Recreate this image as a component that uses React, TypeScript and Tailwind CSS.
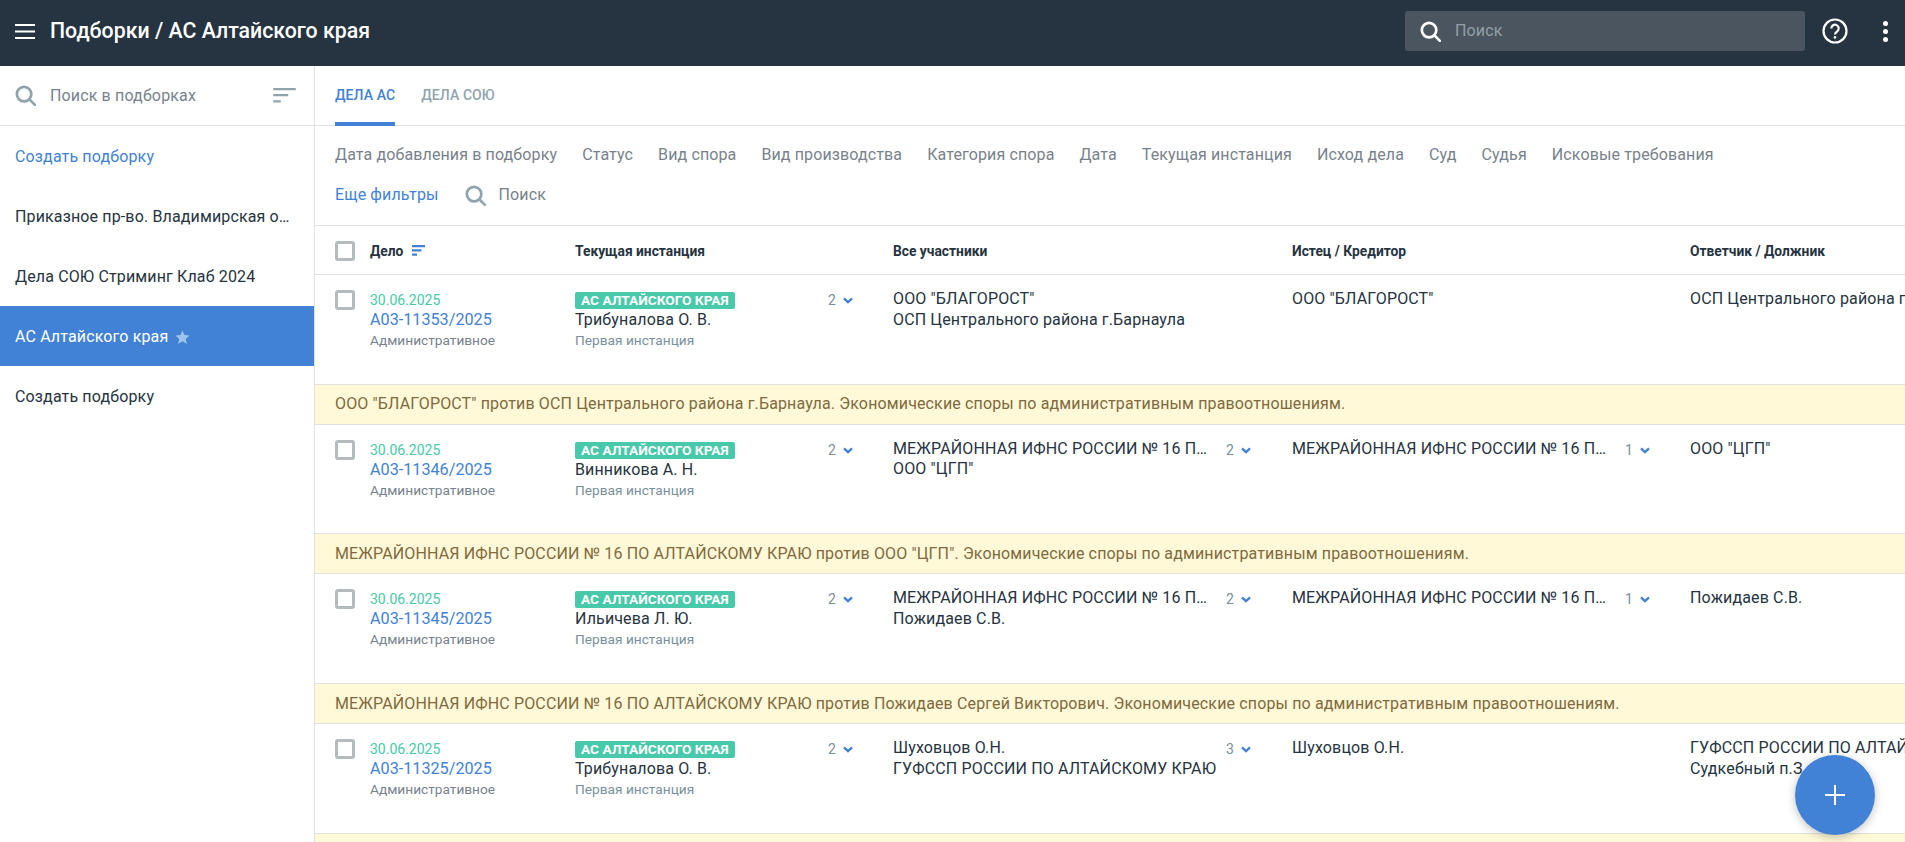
import React from "react";

const SearchIcon = ({ className }: { className: string }) => (
  <svg viewBox="0 0 22 22" fill="none" stroke="currentColor" strokeWidth="2.8" className={className}>
    <circle cx="9.5" cy="9.5" r="7.6" />
    <path d="M15 15l5.8 5.8" strokeLinecap="round" />
  </svg>
);

const SortIcon = ({ className }: { className: string }) => (
  <svg viewBox="0 0 24 16" fill="currentColor" className={className}>
    <path d="M0 0h24v2.4H0zM0 6.5h16v2.4H0zM0 13h8v2.4H0z" />
  </svg>
);

const Chevron = () => (
  <svg viewBox="0 0 12 8" fill="none" stroke="#4282d6" strokeWidth="2.8" className="w-[10px] h-[7px]">
    <path d="M1.2 1.4L6 6l4.8-4.6" />
  </svg>
);

const Checkbox = () => <div className="w-5 h-5 border-[3px] border-[#b4bbbf] rounded-[3px] bg-white shrink-0" />;

const Count = ({ n }: { n: number }) => (
  <div className="mt-[1px] flex items-center gap-[7px] text-[14px] leading-[21px] text-[#78909c] shrink-0">
    <span>{n}</span>
    <Chevron />
  </div>
);

const Cell = ({ lines, count }: { lines: string[]; count?: number }) => (
  <div className="flex items-start pt-[14px]">
    <div className="w-[333px] shrink-0 text-[16px] tracking-[0.14px] leading-[20.5px] text-[#263340]">
      {lines.map((l) => (
        <div key={l} className="w-[325px] truncate">
          {l}
        </div>
      ))}
    </div>
    {count ? <Count n={count} /> : null}
  </div>
);

type Row = {
  num: string;
  judge: string;
  all: string[];
  allCount?: number;
  plaintiff: string;
  plaintiffCount?: number;
  defendant: string[];
  banner: string;
};

const mifns = "МЕЖРАЙОННАЯ ИФНС РОССИИ № 16 ПО АЛТАЙСКОМУ КРАЮ";

const rows: Row[] = [
  {
    num: "А03-11353/2025",
    judge: "Трибуналова О. В.",
    all: ['ООО "БЛАГОРОСТ"', "ОСП Центрального района г.Барнаула"],
    plaintiff: 'ООО "БЛАГОРОСТ"',
    defendant: ["ОСП Центрального района г.Барнаула"],
    banner: 'ООО "БЛАГОРОСТ" против ОСП Центрального района г.Барнаула. Экономические споры по административным правоотношениям.',
  },
  {
    num: "А03-11346/2025",
    judge: "Винникова А. Н.",
    all: [mifns, 'ООО "ЦГП"'],
    allCount: 2,
    plaintiff: mifns,
    plaintiffCount: 1,
    defendant: ['ООО "ЦГП"'],
    banner: 'МЕЖРАЙОННАЯ ИФНС РОССИИ № 16 ПО АЛТАЙСКОМУ КРАЮ против ООО "ЦГП". Экономические споры по административным правоотношениям.',
  },
  {
    num: "А03-11345/2025",
    judge: "Ильичева Л. Ю.",
    all: [mifns, "Пожидаев С.В."],
    allCount: 2,
    plaintiff: mifns,
    plaintiffCount: 1,
    defendant: ["Пожидаев С.В."],
    banner: "МЕЖРАЙОННАЯ ИФНС РОССИИ № 16 ПО АЛТАЙСКОМУ КРАЮ против Пожидаев Сергей Викторович. Экономические споры по административным правоотношениям.",
  },
  {
    num: "А03-11325/2025",
    judge: "Трибуналова О. В.",
    all: ["Шуховцов О.Н.", "ГУФССП РОССИИ ПО АЛТАЙСКОМУ КРАЮ"],
    allCount: 3,
    plaintiff: "Шуховцов О.Н.",
    defendant: ["ГУФССП РОССИИ ПО АЛТАЙСКОМУ КРАЮ", "Судкебный п.З."],
    banner: "",
  },
];

const filters = [
  "Дата добавления в подборку",
  "Статус",
  "Вид спора",
  "Вид производства",
  "Категория спора",
  "Дата",
  "Текущая инстанция",
  "Исход дела",
  "Суд",
  "Судья",
  "Исковые требования",
];

const sideItems = ["Приказное пр-во. Владимирская область", "Дела СОЮ Стриминг Клаб 2024"];

const gridCols = "grid grid-cols-[55px_205px_318px_399px_398px_500px]";

export default function App() {
  return (
    <div className="relative w-[1905px] h-[842px] overflow-hidden bg-white font-['Roboto',sans-serif] flex flex-col">
      <header className="h-[66px] shrink-0 bg-[#263340] flex items-center pl-[15px] pr-[17px] pb-[4px] text-white">
        <svg viewBox="0 0 20 15" fill="white" className="w-5 h-[15px] mr-[15px]">
          <path d="M0 0h20v2H0zM0 6.5h20v2H0zM0 13h20v2H0z" />
        </svg>
        <div className="text-[21.3px] font-medium leading-none">Подборки / АС Алтайского края</div>
        <div className="ml-auto w-[400px] h-10 bg-[#4a5560] rounded-[3px] flex items-center pl-[15px]">
          <SearchIcon className="w-[21px] h-[21px] text-white" />
          <span className="ml-[14px] text-[16px] tracking-[0.14px] text-[#93a0a6]">Поиск</span>
        </div>
        <div className="ml-[17px] w-[26px] flex justify-center">
          <svg viewBox="0 0 26 26" fill="none" stroke="white" className="w-[26px] h-[26px]">
            <circle cx="13" cy="13" r="11.5" strokeWidth="2.2" />
            <path d="M9.3 10.4a3.7 3.7 0 1 1 5.9 3c-1.4 1-2.2 1.6-2.2 3.2" strokeWidth="2.2" />
            <circle cx="13" cy="19.4" r="1.3" fill="white" stroke="none" />
          </svg>
        </div>
        <div className="ml-[35px] flex flex-col gap-[3px]">
          <div className="w-[5px] h-[5px] rounded-full bg-white" />
          <div className="w-[5px] h-[5px] rounded-full bg-white" />
          <div className="w-[5px] h-[5px] rounded-full bg-white" />
        </div>
      </header>

      <div className="flex flex-1 min-h-0">
        <aside className="w-[315px] shrink-0 border-r border-[#dfe2e4] text-[16px] tracking-[0.14px]">
          <div className="h-[60px] border-b border-[#dfe2e4] flex items-center pl-[15px] pr-[18px]">
            <SearchIcon className="w-[21px] h-[21px] text-[#90a4ae]" />
            <span className="ml-[14px] text-[#78828c]">Поиск в подборках</span>
            <SortIcon className="ml-auto w-[23px] h-[15px] text-[#90a4ae]" />
          </div>
          <div className="h-[60px] pt-[2px] flex items-center px-[15px] text-[#4282d6]">Создать подборку</div>
          {sideItems.map((s) => (
            <div key={s} className="h-[60px] pt-[2px] flex items-center pl-[15px] pr-[20px] text-[#263340]">
              <span className="truncate">{s}</span>
            </div>
          ))}
          <div className="h-[60px] pt-[2px] flex items-center px-[15px] text-white bg-[#4282d6]">
            <span>АС Алтайского края</span>
            <svg viewBox="0 0 24 24" fill="#9cc6e8" className="ml-[6px] w-[17px] h-[17px]">
              <path d="M12 17.27L18.18 21l-1.64-7.03L22 9.24l-7.19-.61L12 2 9.19 8.63 2 9.24l5.46 4.73L5.82 21z" />
            </svg>
          </div>
          <div className="h-[60px] pt-[2px] flex items-center px-[15px] text-[#263340]">Создать подборку</div>
        </aside>

        <main className="flex-1 min-w-0 overflow-hidden">
          <div className="h-[60px] border-b border-[#dfe2e4] flex pl-5 gap-[26px] text-[14px] tracking-[0.1px] font-medium">
            <div className="relative flex items-center text-[#4282d6]">
              ДЕЛА АС
              <div className="absolute left-0 right-0 bottom-[-1px] h-1 bg-[#4282d6]" />
            </div>
            <div className="flex items-center text-[#90a4ae]">ДЕЛА СОЮ</div>
          </div>

          <div className="h-[100px] border-b border-[#dfe2e4] pl-5 pt-[9px] text-[16px] tracking-[0.12px] text-[#78828c]">
            <div className="flex gap-[25px] h-[40px] items-center">
              {filters.map((f) => (
                <span key={f}>{f}</span>
              ))}
            </div>
            <div className="flex items-center h-[40px]">
              <span className="text-[#4282d6]">Еще фильтры</span>
              <SearchIcon className="ml-[26px] w-[21px] h-[21px] text-[#90a4ae]" />
              <span className="ml-[13px]">Поиск</span>
            </div>
          </div>

          <div className={`${gridCols} h-[49px] pt-[2px] border-b border-[#dfe2e4] items-center text-[13.8px] font-bold text-[#263340]`}>
            <div className="pl-5">
              <Checkbox />
            </div>
            <div className="flex items-center gap-[9px]">
              Дело
              <svg viewBox="0 0 13 11" fill="#4282d6" className="w-[13px] h-[11px] -mt-[2px]">
                <path d="M0 0h13v2.2H0zM0 4.3h9.5v2.2H0zM0 8.6h5v2.2H0z" />
              </svg>
            </div>
            <div>Текущая инстанция</div>
            <div>Все участники</div>
            <div>Истец / Кредитор</div>
            <div>Ответчик / Должник</div>
          </div>

          {rows.map((r) => (
            <div key={r.num}>
              <div className={`${gridCols} h-[108.7px]`}>
                <div className="pl-5 pt-[15px]">
                  <Checkbox />
                </div>
                <div className="pt-[16px]">
                  <div className="text-[14px] leading-[19px] text-[#48c9a9]">30.06.2025</div>
                  <div className="text-[16.2px] leading-[20px] text-[#4282d6]">{r.num}</div>
                  <div className="text-[13.7px] leading-[20px] text-[#78828c]">Административное</div>
                </div>
                <div className="flex items-start pt-[17px]">
                  <div className="w-[253px] shrink-0">
                    <div className="h-[17px] w-fit rounded-[2px] bg-[#48c9a9] px-[6px] text-[13.7px] leading-[17px] font-bold text-white">
                      АС АЛТАЙСКОГО КРАЯ
                    </div>
                    <div className="mt-[1px] text-[16px] tracking-[0.14px] leading-[20px] text-[#263340]">{r.judge}</div>
                    <div className="text-[13.7px] leading-[20px] text-[#78909c]">Первая инстанция</div>
                  </div>
                  <div className="-mt-[3px]">
                    <Count n={2} />
                  </div>
                </div>
                <Cell lines={r.all} count={r.allCount} />
                <Cell lines={[r.plaintiff]} count={r.plaintiffCount} />
                <div className="pt-[14px] text-[16px] tracking-[0.14px] leading-[20.5px] text-[#263340] whitespace-nowrap">
                  {r.defendant.map((d) => (
                    <div key={d}>{d}</div>
                  ))}
                </div>
              </div>
              <div className="h-[41px] border-y border-[#dfe2e4] bg-[#fff9d8] flex items-center pl-5 text-[16px] tracking-[0.14px] text-[#80693d] whitespace-nowrap">
                {r.banner}
              </div>
            </div>
          ))}
        </main>
      </div>

      <div className="absolute left-[1795px] top-[755px] w-20 h-20 rounded-full bg-[#4282d6] shadow-[0_2px_10px_rgba(0,0,0,0.25)] flex items-center justify-center">
        <svg viewBox="0 0 20 20" stroke="white" strokeWidth="2" className="w-5 h-5">
          <path d="M10 0v20M0 10h20" />
        </svg>
      </div>
    </div>
  );
}
